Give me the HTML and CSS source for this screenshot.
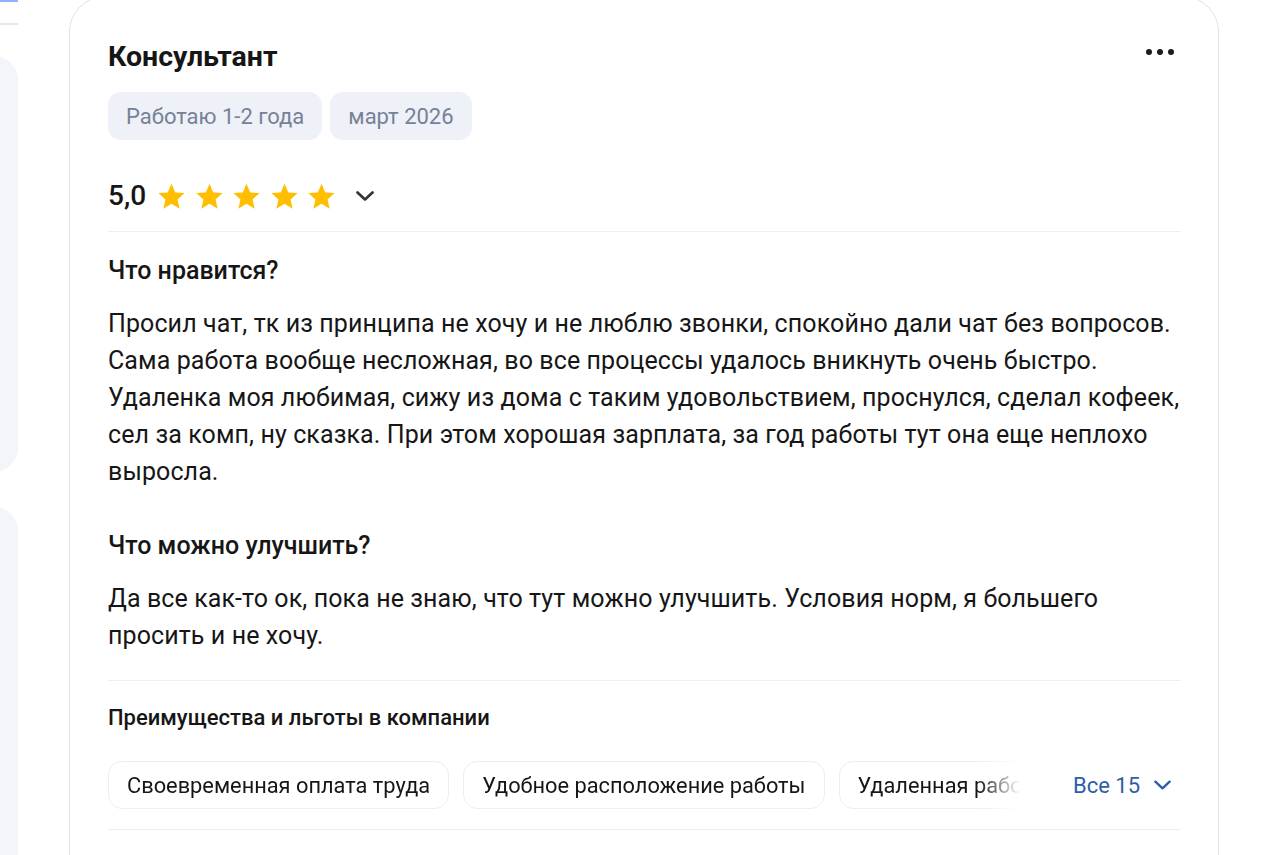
FILE: index.html
```html
<!DOCTYPE html>
<html lang="ru">
<head>
<meta charset="utf-8">
<title>Отзыв</title>
<link rel="stylesheet" href="styles.css">
</head>
<body>
<div class="page">
  <aside class="side">
    <div class="side-tab"></div>
    <div class="side-line"></div>
    <div class="side-panel side-panel-a"></div>
    <div class="side-panel side-panel-b"></div>
  </aside>
  <article class="card">
    <header class="card-head">
      <h2 class="card-title">Консультант</h2>
      <button class="more" aria-label="Ещё">
        <svg width="30" height="8" viewBox="0 0 30 8"><circle cx="4" cy="4" r="3"/><circle cx="15" cy="4" r="3"/><circle cx="26" cy="4" r="3"/></svg>
      </button>
    </header>
    <div class="tags">
      <span class="tag">Работаю 1-2 года</span>
      <span class="tag">март 2026</span>
    </div>
    <div class="rating">
      <span class="score">5,0</span>
      <span class="stars">
        <svg class="star" viewBox="0 0 24 24"><path d="M12 1.4l3.1 7.2 7.8.6-5.9 5.2 1.8 7.7L12 18l-6.8 4.1 1.8-7.7-5.9-5.2 7.8-.6z"/></svg>
        <svg class="star" viewBox="0 0 24 24"><path d="M12 1.4l3.1 7.2 7.8.6-5.9 5.2 1.8 7.7L12 18l-6.8 4.1 1.8-7.7-5.9-5.2 7.8-.6z"/></svg>
        <svg class="star" viewBox="0 0 24 24"><path d="M12 1.4l3.1 7.2 7.8.6-5.9 5.2 1.8 7.7L12 18l-6.8 4.1 1.8-7.7-5.9-5.2 7.8-.6z"/></svg>
        <svg class="star" viewBox="0 0 24 24"><path d="M12 1.4l3.1 7.2 7.8.6-5.9 5.2 1.8 7.7L12 18l-6.8 4.1 1.8-7.7-5.9-5.2 7.8-.6z"/></svg>
        <svg class="star" viewBox="0 0 24 24"><path d="M12 1.4l3.1 7.2 7.8.6-5.9 5.2 1.8 7.7L12 18l-6.8 4.1 1.8-7.7-5.9-5.2 7.8-.6z"/></svg>
      </span>
      <svg class="chev chev-dark" viewBox="0 0 18 10"><path d="M1.5 1.5l7.5 7 7.5-7"/></svg>
    </div>
    <div class="divider"></div>
    <section class="block block-first">
      <h3 class="block-title">Что нравится?</h3>
      <p class="block-text">Просил чат, тк из принципа не хочу и не люблю звонки, спокойно дали чат без вопросов. Сама работа вообще несложная, во все процессы удалось вникнуть очень быстро. Удаленка моя любимая, сижу из дома с таким удовольствием, проснулся, сделал кофеек, сел за комп, ну сказка. При этом хорошая зарплата, за год работы тут она еще неплохо выросла.</p>
    </section>
    <section class="block block-second">
      <h3 class="block-title">Что можно улучшить?</h3>
      <p class="block-text">Да все как-то ок, пока не знаю, что тут можно улучшить. Условия норм, я большего просить и не хочу.</p>
    </section>
    <div class="divider divider-mid"></div>
    <section class="perks">
      <h4 class="perks-title">Преимущества и льготы в компании</h4>
      <div class="perks-row">
        <div class="perks-list">
          <span class="perk">Своевременная оплата труда</span>
          <span class="perk">Удобное расположение работы</span>
          <span class="perk">Удаленная работа</span>
        </div>
        <button class="all">Все 15
          <svg class="chev chev-blue" viewBox="0 0 18 10"><path d="M1.5 1.5l7.5 7 7.5-7"/></svg>
        </button>
      </div>
    </section>
    <div class="divider divider-bottom"></div>
  </article>
</div>
</body>
</html>
```
FILE: styles.css
```css
* { box-sizing: border-box; }
html, body { margin: 0; padding: 0; background: #fff; }
body {
  font-family: Roboto, "Noto Sans", Arial, sans-serif;
  color: #161616;
  width: 1283px;
  height: 855px;
  overflow: hidden;
}
.page {
  display: flex;
  align-items: flex-start;
}
.side {
  width: 18px;
  flex: none;
  overflow: hidden;
  display: flex;
  flex-direction: column;
}
.side-tab {
  height: 2px;
  width: 20px;
  background: #3b82f6;
  opacity: 0.6;
}
.side-line {
  margin-top: 21px;
  height: 2px;
  width: 18px;
  background: #e4e7ee;
}
.side-panel {
  width: 60px;
  margin-left: -42px;
  background: #f4f5fa;
  border-radius: 24px;
}
.side-panel-a { margin-top: 31px; height: 416px; }
.side-panel-b { margin-top: 35px; height: 400px; }
.card {
  margin-left: 51px;
  margin-top: -4px;
  width: 1150px;
  height: 900px;
  border: 1px solid #dde2ea;
  border-radius: 36px;
  padding: 43px 37px 0 38px;
  flex: none;
}
.card-head {
  display: flex;
  justify-content: space-between;
  align-items: flex-start;
  height: 34px;
}
.card-title {
  margin: 0;
  font-size: 28.5px;
  line-height: 34px;
  font-weight: 700;
  color: #161616;
}
.more {
  border: 0;
  background: none;
  padding: 0;
  margin: 8px 6px 0 0;
  display: flex;
}
.more svg { fill: #1c1c1c; }
.tags {
  display: flex;
  gap: 8px;
  margin-top: 18px;
}
.tag {
  height: 48px;
  padding: 0 18px;
  display: flex;
  align-items: center;
  background: #eef1f7;
  border-radius: 13px;
  font-size: 22px;
  color: #778196;
}
.rating {
  display: flex;
  align-items: center;
  height: 40px;
  margin-top: 36px;
}
.score {
  font-size: 28px;
  line-height: 40px;
  font-weight: 500;
  color: #161616;
  margin-right: 11px;
}
.stars {
  display: flex;
  gap: 8.5px;
}
.star {
  width: 29px;
  height: 29px;
  fill: #ffbf00;
}
.chev {
  fill: none;
  stroke-width: 2.6;
  stroke-linecap: round;
  stroke-linejoin: round;
}
.chev-dark {
  width: 18px;
  height: 10px;
  stroke: #333;
  margin-left: 20px;
}
.divider {
  height: 1px;
  background: #eceef2;
  margin-top: 15px;
}
.block-first { margin-top: 24px; }
.block-second { margin-top: 41px; }
.block-title {
  margin: 0;
  font-size: 25px;
  font-weight: 500;
  line-height: 30px;
  color: #161616;
}
.block-text {
  margin: 19px 0 0;
  font-size: 25px;
  line-height: 37px;
  letter-spacing: 0.1px;
  color: #161616;
}
.divider-mid { margin-top: 26px; }
.perks { margin-top: 23px; }
.perks-title {
  margin: 0;
  font-size: 22px;
  font-weight: 500;
  line-height: 28px;
  color: #161616;
}
.perks-row {
  display: flex;
  align-items: center;
  margin-top: 29px;
}
.perks-list {
  display: flex;
  gap: 14px;
  width: 912px;
  flex: none;
  overflow: hidden;
  white-space: nowrap;
  -webkit-mask-image: linear-gradient(to right, #000 870px, transparent 912px);
  mask-image: linear-gradient(to right, #000 870px, transparent 912px);
}
.perk {
  flex: none;
  height: 48px;
  padding: 0 18px;
  display: flex;
  align-items: center;
  border: 1px solid #eceef3;
  border-radius: 14px;
  font-size: 21.8px;
  color: #161616;
}
.all {
  margin-left: auto;
  border: 0;
  background: none;
  padding: 0 10px 0 0;
  display: flex;
  align-items: center;
  gap: 14px;
  font-family: inherit;
  font-size: 22px;
  color: #2c5fa8;
}
.chev-blue {
  width: 17px;
  height: 10px;
  stroke: #2c5fa8;
}
.divider-bottom { margin-top: 20px; }
```
